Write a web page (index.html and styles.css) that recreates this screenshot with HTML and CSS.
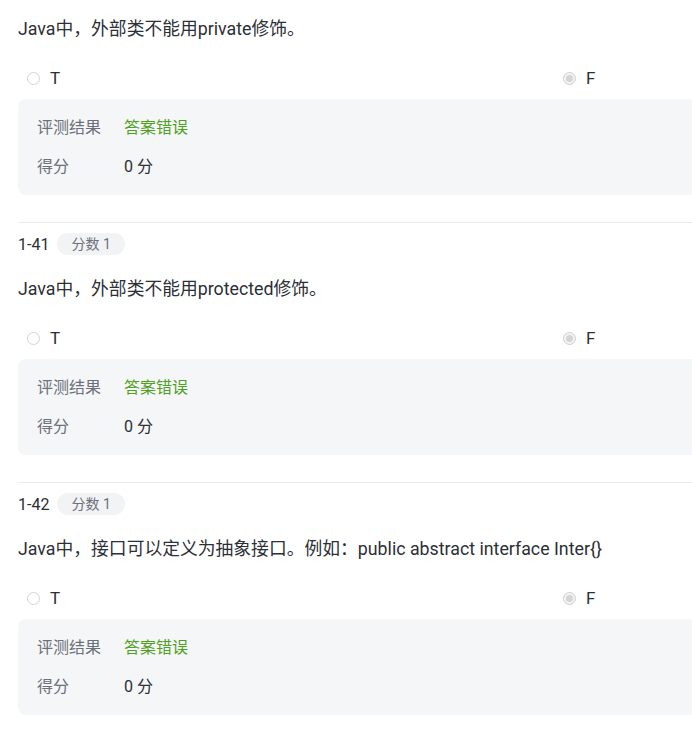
FILE: index.html
```html
<!DOCTYPE html>
<html lang="zh-CN">
<head>
<meta charset="utf-8">
<title>判断题</title>
<link rel="stylesheet" href="styles.css">
</head>
<body>
<div class="page">
  <section class="question first">
    <p class="q-text">Java中，外部类不能用private修饰。</p>
    <div class="options">
      <label class="opt"><span class="radio"></span><span class="opt-label">T</span></label>
      <label class="opt"><span class="radio checked"></span><span class="opt-label">F</span></label>
    </div>
    <div class="result">
      <div class="row"><span class="k">评测结果</span><span class="v wrong">答案错误</span></div>
      <div class="row"><span class="k">得分</span><span class="v">0 分</span></div>
    </div>
  </section>

  <section class="question">
    <div class="q-head"><span class="q-no">1-41</span><span class="badge">分数 1</span></div>
    <p class="q-text">Java中，外部类不能用protected修饰。</p>
    <div class="options">
      <label class="opt"><span class="radio"></span><span class="opt-label">T</span></label>
      <label class="opt"><span class="radio checked"></span><span class="opt-label">F</span></label>
    </div>
    <div class="result">
      <div class="row"><span class="k">评测结果</span><span class="v wrong">答案错误</span></div>
      <div class="row"><span class="k">得分</span><span class="v">0 分</span></div>
    </div>
  </section>

  <section class="question">
    <div class="q-head"><span class="q-no">1-42</span><span class="badge">分数 1</span></div>
    <p class="q-text">Java中，接口可以定义为抽象接口。例如：public abstract interface Inter{}</p>
    <div class="options">
      <label class="opt"><span class="radio"></span><span class="opt-label">T</span></label>
      <label class="opt"><span class="radio checked"></span><span class="opt-label">F</span></label>
    </div>
    <div class="result">
      <div class="row"><span class="k">评测结果</span><span class="v wrong">答案错误</span></div>
      <div class="row"><span class="k">得分</span><span class="v">0 分</span></div>
    </div>
  </section>
</div>
</body>
</html>
```
FILE: styles.css
```css
html, body {
  margin: 0;
  padding: 0;
  background: #ffffff;
  overflow: hidden;
}
body {
  font-family: Roboto, "Noto Sans CJK SC", "Noto Sans", sans-serif;
  color: #2b2f36;
}
.page {
  width: 1100px;
  padding: 17px 0 0 18px;
}
.question {
  border-top: 1px solid #ebebeb;
  padding-top: 10px;
  padding-bottom: 27px;
}
.question.first {
  border-top: none;
  padding-top: 0;
}
.q-head {
  display: flex;
  align-items: center;
  gap: 8px;
  height: 22px;
  margin-bottom: 22px;
}
.q-no {
  font-size: 16px;
  color: #2b2f36;
}
.badge {
  height: 22px;
  line-height: 22px;
  padding: 0 14px;
  border-radius: 11px;
  background: #f2f3f5;
  color: #6b7079;
  font-size: 14px;
}
.q-text {
  margin: 0;
  font-size: 17.8px;
  line-height: 24px;
  color: #2b2f36;
}
.options {
  display: grid;
  grid-template-columns: 536px 536px;
  padding-left: 9px;
  margin-top: 25px;
  height: 24px;
}
.opt {
  display: flex;
  align-items: center;
  gap: 10px;
  font-size: 17px;
  line-height: 24px;
  color: #2b2f36;
}
.radio {
  box-sizing: border-box;
  width: 13px;
  height: 13px;
  border: 1px solid #d3d3d3;
  border-radius: 50%;
  background: #fff;
  position: relative;
}
.radio.checked {
  background: #f3f3f3;
  border-color: #cfcfcf;
}
.radio.checked::after {
  content: "";
  position: absolute;
  left: 2px;
  top: 2px;
  width: 7px;
  height: 7px;
  border-radius: 50%;
  background: #d4d4d4;
}
.result {
  margin-top: 9px;
  background: #f5f6f8;
  border-radius: 8px;
  padding: 9px 19px;
}
.row {
  display: flex;
  align-items: center;
  height: 39px;
  line-height: 20px;
  font-size: 16px;
}
.k {
  width: 87px;
  color: #6b7079;
}
.v {
  color: #2b2f36;
}
.v.wrong {
  color: #4fa01d;
}
```
